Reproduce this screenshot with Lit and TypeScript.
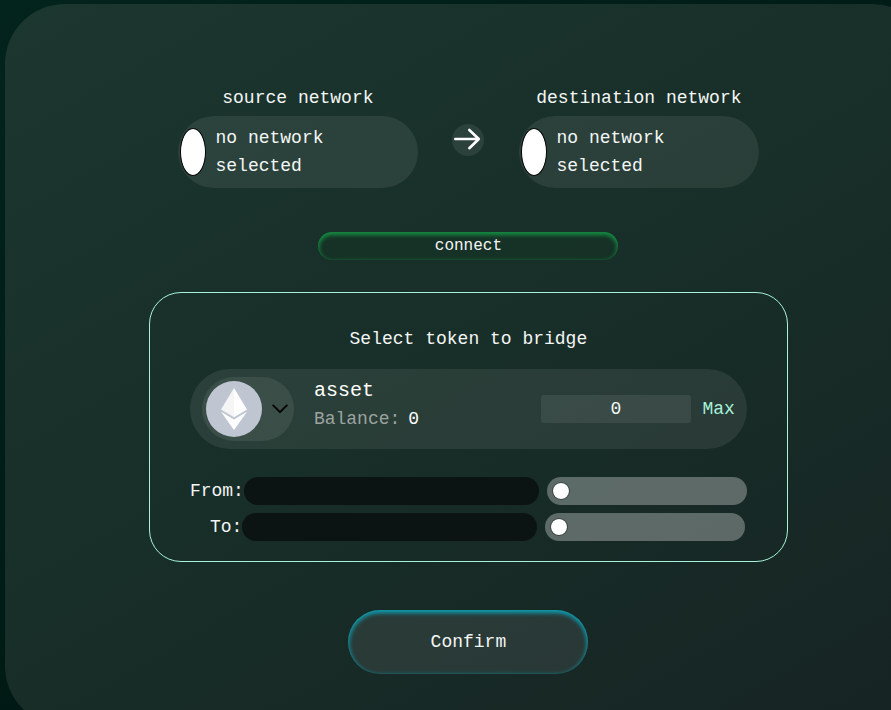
import { LitElement, html, css } from "lit";
import { customElement, property } from "lit/decorators.js";

@customElement("network-picker")
class NetworkPicker extends LitElement {
  @property() label = "";

  static styles = css`
    :host {
      display: flex;
      flex-direction: column;
      width: 240px;
    }
    .label {
      text-align: center;
      height: 32px;
      line-height: 28px;
    }
    .pill {
      display: flex;
      align-items: center;
      box-sizing: border-box;
      height: 72px;
      padding: 0 40px 0 2px;
      border-radius: 36px;
      background: rgba(255, 255, 255, 0.08);
    }
    .logo {
      box-sizing: border-box;
      flex: none;
      width: 26px;
      height: 48px;
      margin-right: 9.6px;
      border: 1px solid #000;
      border-radius: 50%;
      background: #fff;
    }
    .name {
      width: 130px;
    }
  `;

  render() {
    return html`
      <div class="label">${this.label}</div>
      <div class="pill">
        <div class="logo"></div>
        <div class="name">no network selected</div>
      </div>
    `;
  }
}

@customElement("address-row")
class AddressRow extends LitElement {
  @property() label = "";

  static styles = css`
    :host {
      display: flex;
      height: 28px;
    }
    .field {
      width: 295px;
      border-radius: 14px;
      background: #0b1412;
    }
    .toggle {
      display: flex;
      align-items: center;
      box-sizing: border-box;
      width: 200px;
      margin-left: 8px;
      padding-left: 5px;
      border-radius: 14px;
      background: rgba(255, 255, 255, 0.3);
    }
    .knob {
      box-sizing: border-box;
      width: 18px;
      height: 18px;
      border: 1px solid rgba(0, 0, 0, 0.35);
      border-radius: 50%;
      background: #fff;
      background-clip: padding-box;
    }
  `;

  render() {
    return html`
      <span>${this.label}</span>
      <div class="field"></div>
      <div class="toggle"><div class="knob"></div></div>
    `;
  }
}

@customElement("app-root")
class AppRoot extends LitElement {
  static styles = css`
    :host {
      display: block;
      box-sizing: border-box;
      width: 100%;
      height: 710px;
      overflow: hidden;
      padding: 4px 0 0 5px;
      color: #f4f6f5;
      font: 18px/28px "Liberation Mono", monospace;
      background: linear-gradient(150deg, #03231d 0%, #001a14 55%, #000f0e 100%);
    }
    .panel {
      display: flex;
      flex-direction: column;
      align-items: center;
      box-sizing: border-box;
      width: 926.8px;
      height: 722px;
      padding-top: 80px;
      border-radius: 60px;
      background: linear-gradient(150deg, #1c3630 0%, #182e28 50%, #162423 100%);
    }
    .networks {
      display: flex;
      width: 581px;
      justify-content: space-between;
    }
    .swap {
      display: flex;
      width: 32px;
      height: 32px;
      margin-top: 40px;
      border-radius: 50%;
      background: rgba(255, 255, 255, 0.08);
    }
    .connect {
      width: 300px;
      height: 28px;
      margin-top: 44px;
      border-radius: 14px;
      text-align: center;
      font-size: 16px;
      line-height: 28px;
      background: rgba(22, 50, 37, 0.7);
      box-shadow: inset 0 2px 4px 1px #148f43;
    }
    .card {
      box-sizing: border-box;
      width: 639px;
      height: 270px;
      margin-top: 32px;
      padding: 32px 40px 0;
      border: 1px solid #a7f3d9;
      border-radius: 32px;
    }
    .title {
      text-align: center;
    }
    .asset {
      display: flex;
      align-items: center;
      box-sizing: border-box;
      height: 80px;
      margin: 16px 0 28px;
      padding: 0 12px;
      border-radius: 40px;
      background: rgba(255, 255, 255, 0.08);
    }
    .token {
      display: flex;
      align-items: center;
      box-sizing: border-box;
      width: 92px;
      height: 64px;
      padding-left: 4px;
      border-radius: 32px;
      background: rgba(255, 255, 255, 0.08);
    }
    .chevron {
      margin-left: 10px;
    }
    .info {
      flex: 1;
      margin-left: 20px;
      padding-bottom: 9px;
      color: #fff;
    }
    .name {
      font-size: 20px;
    }
    .balance {
      display: flex;
      gap: 8px;
    }
    .muted {
      color: #9ca3a0;
    }
    .amount {
      width: 150px;
      height: 28px;
      margin-right: 11.5px;
      border-radius: 3px;
      text-align: center;
      background: rgba(255, 255, 255, 0.08);
    }
    .max {
      color: #a7f3d9;
    }
    .rows {
      display: flex;
      flex-direction: column;
      gap: 8px;
    }
    .indented {
      padding-left: 20px;
    }
    .confirm {
      width: 240px;
      height: 64px;
      margin-top: 48px;
      border-radius: 32px;
      text-align: center;
      line-height: 64px;
      background: rgba(255, 255, 255, 0.08);
      box-shadow: inset 0 2px 4px 1px #0e9fb4;
    }
  `;

  render() {
    return html`
      <main class="panel">
        <div class="networks">
          <network-picker label="source network"></network-picker>
          <div class="swap">
            <svg width="32" height="32" viewBox="0 0 32 32" fill="none" stroke="#fff" stroke-width="2.6" stroke-linecap="round" stroke-linejoin="round">
              <path d="M3.3 15H26.6M17.3 6L26.8 15L17.3 24.2" />
            </svg>
          </div>
          <network-picker label="destination network"></network-picker>
        </div>
        <div class="connect">connect</div>
        <section class="card">
          <div class="title">Select token to bridge</div>
          <div class="asset">
            <div class="token">
              <svg width="56" height="56" viewBox="0 0 56 56">
                <circle cx="28" cy="28" r="28" fill="#bfc6d2" />
                <path d="M28 7L15 28.5L28 36.2Z" fill="#f5f5f6" />
                <path d="M28 7L41 28.5L28 36.2Z" fill="#fff" />
                <path d="M15 30.8L28 38.5L41 30.8L28 49Z" fill="#fff" />
              </svg>
              <svg class="chevron" width="16" height="16" viewBox="0 0 16 16" fill="none" stroke="#000" stroke-width="1.8" stroke-linecap="round" stroke-linejoin="round">
                <path d="M1.2 4.4L8 11.2L14.8 4.4" />
              </svg>
            </div>
            <div class="info">
              <div class="name">asset</div>
              <div class="balance"><span class="muted">Balance:</span><span>0</span></div>
            </div>
            <div class="amount">0</div>
            <div class="max">Max</div>
          </div>
          <div class="rows">
            <address-row label="From:"></address-row>
            <address-row class="indented" label="To:"></address-row>
          </div>
        </section>
        <div class="confirm">Confirm</div>
      </main>
    `;
  }
}
